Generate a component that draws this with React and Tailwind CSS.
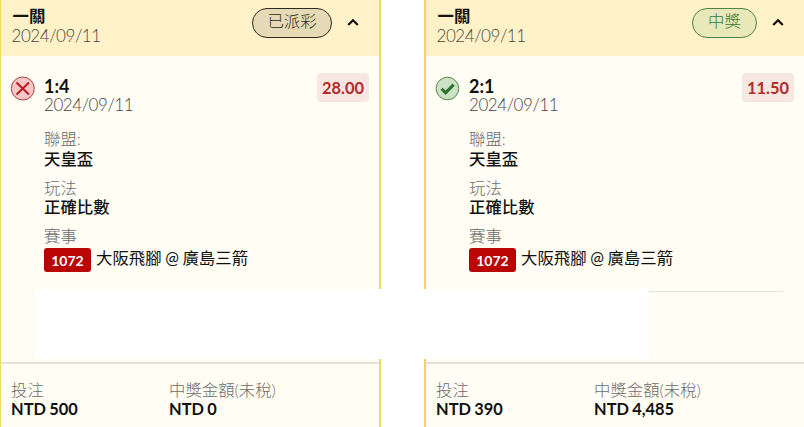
import React from "react";

const bets = [
  {
    id: "a", score: "1:4", won: false, status: "已派彩", odds: "28.00",
    stake: "NTD 500", payout: "NTD 0",
    pill: "w-[80px] border-[#2e2b1f] bg-[#e5dab5] text-[#2e2b1f]",
    border: "border-[#f0da5c]",
  },
  {
    id: "b", score: "2:1", won: true, status: "中獎", odds: "11.50",
    stake: "NTD 390", payout: "NTD 4,485",
    pill: "w-[65px] border-[#4d8446] bg-[#e9e8b8] text-[#397a36]",
    border: "border-[#fad25a]",
  },
];

function ResultIcon({ won }) {
  return (
    <svg className="mt-[20px] h-[25px] w-[25px] shrink-0" viewBox="0 0 25 25" fill="none">
      {won ? (
        <>
          <circle cx="12.4" cy="12.5" r="11.3" fill="#cbe3c4" stroke="#56854f" />
          <path d="M6.6 12.8l4 4 8-8.2" stroke="#2f7030" strokeWidth="3" />
        </>
      ) : (
        <>
          <circle cx="12.8" cy="12.5" r="11.5" fill="#f7c6c6" stroke="#a64040" />
          <path d="M6.5 6.5l12.5 12M19 6.5L6.5 18.5" stroke="#b81c20" strokeWidth="2" />
        </>
      )}
    </svg>
  );
}

function Field({ label, value, className = "", valueClass = "font-medium" }) {
  return (
    <div className={className}>
      <div className="h-[19px] font-light leading-[19px] text-[#6c6c6c]">{label}</div>
      <div className={`h-[20px] leading-[19px] text-[#111] ${valueClass}`}>{value}</div>
    </div>
  );
}

function BetCard({ bet }) {
  return (
    <section className={`flex h-[427px] w-[382px] shrink-0 flex-col border-x-2 bg-[#fffdf4] ${bet.border}`}>
      <header className="flex h-[56px] bg-[#fff2c9] pl-[10.5px]">
        <div className="pt-[6px]">
          <div className="h-[20px] pl-px font-bold leading-[19px] text-[#151515]">一關</div>
          <div className="h-[20px] text-[17px] font-light leading-[19px] tracking-[-0.45px] text-[#4c483b]">2024/09/11</div>
        </div>
        <div className={`mt-[8px] ml-auto flex h-[30px] items-center justify-center rounded-full border pb-[3px] font-light ${bet.pill}`}>
          {bet.status}
        </div>
        <svg className="mr-[20px] ml-[15px] mt-[18px] h-[9px] w-[12px]" viewBox="0 0 12 9" fill="none">
          <path d="M1.2 7L6 2.2 10.8 7" stroke="#111" strokeWidth="2.2" />
        </svg>
      </header>

      <div className="flex h-[73px] pl-[9px] pr-[10px]">
        <ResultIcon won={bet.won} />
        <div className="ml-[9px] pt-[21px]">
          <div className="h-[19px] text-[18px] font-bold leading-[18px] text-[#111]">{bet.score}</div>
          <div className="text-[17px] font-light leading-[18px] tracking-[-0.45px] text-[#484848]">2024/09/11</div>
        </div>
        <div className="ml-auto mt-[17px] flex h-[29px] w-[52px] items-center justify-center rounded-[4px] bg-[#f8e6e0] pt-px font-bold text-[#b22c2e]">
          {bet.odds}
        </div>
      </div>

      <div className="flex h-[233px] flex-col pl-[43px] pr-[21px]">
        <Field label="聯盟:" value="天皇盃" className="h-[49px]" valueClass="pt-px font-medium" />
        <Field label="玩法" value="正確比數" className="h-[48px]" />
        <div className="h-[19px] font-light leading-[19px] text-[#6c6c6c]">賽事</div>
        <div className="mt-[3px] flex">
          <span className="flex h-[24px] w-[47px] items-center justify-center rounded-[3px] bg-[#b90504] pt-[1px] text-[14px] font-bold text-white">1072</span>
          <span className="ml-[5px] whitespace-nowrap leading-[19px] text-[#111] [word-spacing:-0.6px]">大阪飛腳 @ 廣島三箭</span>
        </div>
        <div className="mt-[19px] border-t border-[#e7e3d9]" />
      </div>

      <footer className="flex flex-1 border-t-2 border-[#e7e2d9] pl-[10px] pt-[16px]">
        <Field label="投注" value={bet.stake} className="w-[158px]" valueClass="font-bold [word-spacing:-0.7px]" />
        <Field label="中獎金額(未稅)" value={bet.payout} valueClass="font-bold [word-spacing:-0.7px]" />
      </footer>
    </section>
  );
}

export default function App() {
  return (
    <main className="relative h-[427px] w-[804px] overflow-hidden bg-white font-['Lato','Noto_Sans_CJK_TC',sans-serif] text-[16.4px]">
      <div className="-ml-px flex gap-[43px]">
        {bets.map((bet) => <BetCard key={bet.id} bet={bet} />)}
      </div>
      <div className="absolute left-[35px] top-[289px] h-[70px] w-[614px] bg-white" />
    </main>
  );
}
